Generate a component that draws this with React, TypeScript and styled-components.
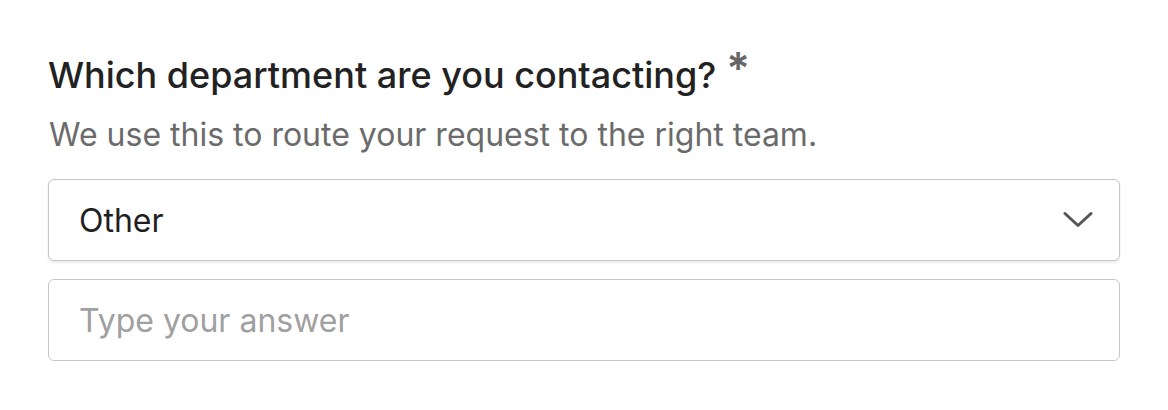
import React from "react";
import styled, { createGlobalStyle } from "styled-components";

const GlobalStyle = createGlobalStyle`
  html, body {
    margin: 0;
    padding: 0;
    background: #ffffff;
    font-family: Inter, "Noto Sans", sans-serif;
  }
`;

const Page = styled.div`
  padding: 53px 49px 0 48px;
  width: 1072px;
`;

const Label = styled.div`
  display: flex;
  align-items: flex-start;
  font-size: 36px;
  font-weight: 500;
  color: #222222;
  line-height: 44px;
`;

const Required = styled.span`
  margin-left: 10px;
  margin-top: -7px;
  font-size: 44px;
  line-height: 44px;
  color: #666666;
  font-weight: 600;
`;

const Hint = styled.p`
  margin: 18px 0 0 1px;
  font-size: 32px;
  line-height: 40px;
  color: #6b6b6b;
`;

const Fields = styled.div`
  display: flex;
  flex-direction: column;
  gap: 18px;
  margin-top: 24px;
`;

const Box = styled.div<{ $raised?: boolean }>`
  height: 82px;
  box-sizing: border-box;
  border: 1.5px solid #c6c6c6;
  border-radius: 6px;
  display: flex;
  align-items: center;
  justify-content: space-between;
  padding: 0 26px 0 30px;
  background: #ffffff;
  box-shadow: ${(p) => (p.$raised ? "0 2px 3px rgba(0,0,0,0.08)" : "none")};
`;

const Value = styled.span`
  font-size: 32px;
  color: #1f1f1f;
`;

const Input = styled.input`
  border: none;
  outline: none;
  width: 100%;
  font-family: inherit;
  font-size: 32px;
  color: #1f1f1f;
  padding: 0;
  &::placeholder {
    color: #a0a0a0;
  }
`;

const Chevron = () => (
  <svg width="30" height="18" viewBox="0 0 30 18" fill="none">
    <path
      d="M2 2.5 L15 14.5 L28 2.5"
      stroke="#555555"
      strokeWidth="3"
      strokeLinecap="round"
      strokeLinejoin="round"
    />
  </svg>
);

export default function App() {
  return (
    <Page>
      <GlobalStyle />
      <Label>
        Which department are you contacting?
        <Required>*</Required>
      </Label>
      <Hint>We use this to route your request to the right team.</Hint>
      <Fields>
        <Box $raised>
          <Value>Other</Value>
          <Chevron />
        </Box>
        <Box>
          <Input placeholder="Type your answer" />
        </Box>
      </Fields>
    </Page>
  );
}
